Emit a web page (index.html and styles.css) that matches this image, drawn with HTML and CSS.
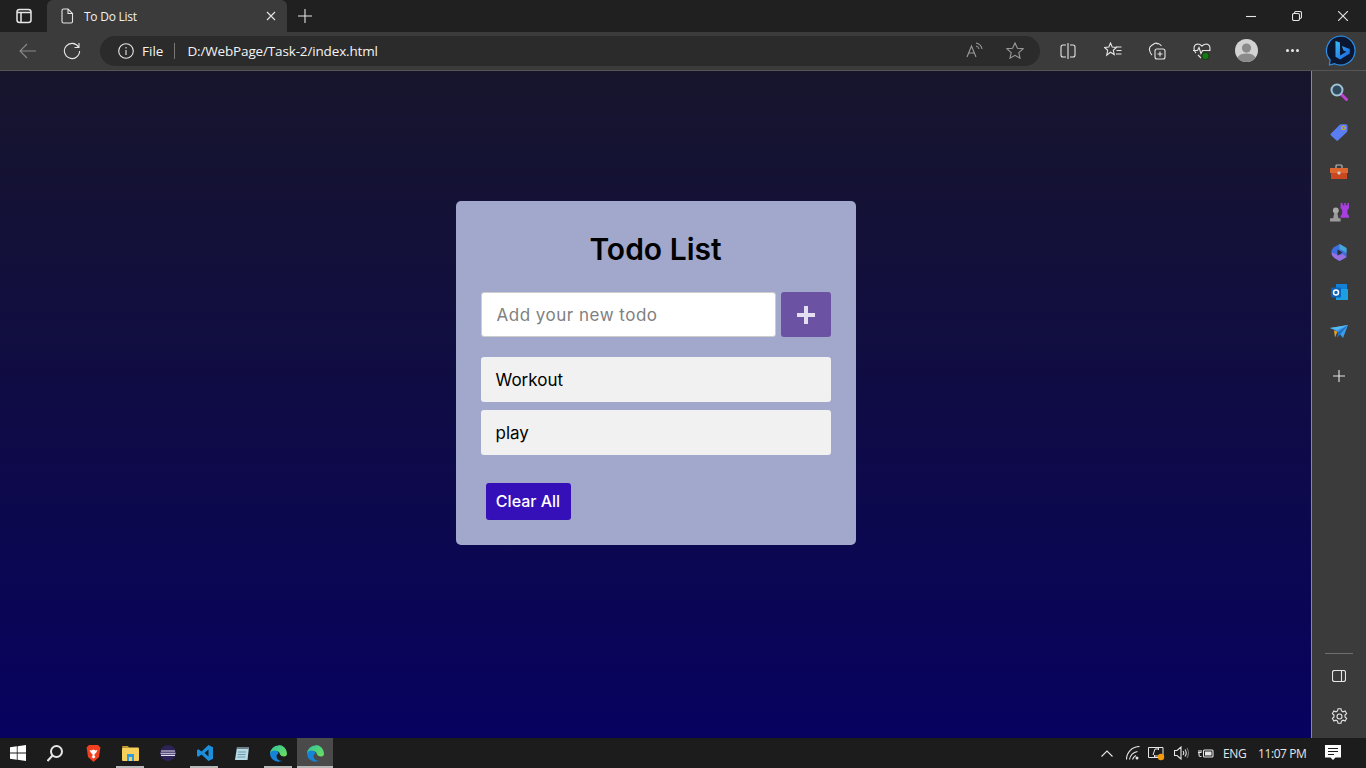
FILE: index.html
```html
<!DOCTYPE html>
<html lang="en">
<head>
    <meta charset="UTF-8">
    <meta name="viewport" content="width=device-width, initial-scale=1.0">
    <title>To Do List</title>
    <link rel="stylesheet" href="styles.css">
</head>
<body>
    <!-- browser title bar -->
    <div class="titlebar">
        <div class="tab-actions">
            <svg class="ico bold" width="16" height="16" viewBox="0 0 16 16"><rect x="1" y="1.500" width="14" height="13" rx="2.500"/><path d="M1 4.500h14M5 4.500v10"/></svg>
        </div>
        <div class="tab">
            <svg class="ico" width="14" height="16" viewBox="0 0 14 16"><path d="M2 2.500q0-1.500 1.500-1.500h4.500l4.500 4.500v8q0 1.500-1.500 1.500h-7.500q-1.500 0-1.500-1.500zM8 1v4.500h4.500"/></svg>
            <span class="tab-title">To Do List</span>
            <svg class="ico tab-close" width="10" height="10" viewBox="0 0 10 10"><path d="M1 1l8 8M9 1l-8 8"/></svg>
        </div>
        <div class="new-tab">
            <svg class="ico" width="14" height="14" viewBox="0 0 14 14"><path d="M7 0v14M0 7h14"/></svg>
        </div>
        <div class="window-btns">
            <div class="win-btn"><svg class="ico" width="10" height="10" viewBox="0 0 10 10"><path d="M0 5.500h10"/></svg></div>
            <div class="win-btn"><svg class="ico" width="10" height="10" viewBox="0 0 10 10"><rect x="0.500" y="2.500" width="7" height="7" rx="1.500"/><path d="M2.500 2.500v-.5q0-1.500 1.500-1.500h4q1.500 0 1.500 1.500v4q0 1.500-1.500 1.500h-.5"/></svg></div>
            <div class="win-btn"><svg class="ico" width="10" height="10" viewBox="0 0 10 10"><path d="M0 0l10 10M10 0l-10 10"/></svg></div>
        </div>
    </div>

    <!-- address bar and toolbar -->
    <div class="toolbar">
        <div class="tool-btn dim"><svg class="ico" width="18" height="16" viewBox="0 0 18 16"><path d="M17 8h-16M8 1l-7 7 7 7"/></svg></div>
        <div class="tool-btn"><svg class="ico" width="18" height="18" viewBox="0 0 18 18"><path d="M15.500 5a7.600 7.600 0 1 0 1.100 4M16 1v4.500h-4.500"/></svg></div>
        <div class="address">
            <svg class="ico" width="16" height="16" viewBox="0 0 16 16"><circle cx="8" cy="8" r="7.300"/><path d="M8 7v5M8 4v1.500"/></svg>
            <span class="scheme">File</span>
            <span class="addr-sep"></span>
            <span class="url">D:/WebPage/Task-2/index.html</span>
            <div class="addr-icons">
                <svg class="ico" width="18" height="16" viewBox="0 0 18 16"><path d="M1 15l4.500-11 4.500 11M2.800 11h5.400M10 1q5 1 6 6M10 4q2.500.5 3 3"/></svg>
                <svg class="ico" width="18" height="17" viewBox="0 0 18 17"><path d="M9 1l2.400 5.200 5.600.6-4.200 3.800 1.200 5.600-5-2.900-5 2.900 1.200-5.600-4.200-3.800 5.600-.6z"/></svg>
            </div>
        </div>
        <div class="tool-icons">
            <div class="tool-slot"><svg class="ico" width="16" height="16" viewBox="0 0 16 16"><path d="M8 0v16M6 2h-3q-2 0-2 2v8q0 2 2 2h3M10 2h3q2 0 2 2v8q0 2-2 2h-3"/></svg></div>
            <div class="tool-slot"><svg class="ico" width="18" height="17" viewBox="0 0 18 17"><path d="M6.500 1l1.700 4 4.300.4-3.200 2.900 1 4.200-3.800-2.300-3.800 3 1-4.900-3.200-2.900 4.300-.4zM12 5h5.500M12.500 8.500h5M12 12h5.500"/></svg></div>
            <div class="tool-slot"><svg class="ico" width="18" height="18" viewBox="0 0 18 18"><path d="M4 13q-2-2-2.500-5-.5-3 2-4.500l3-2q2-1 3.500.5M10 1.500q2 .5 3.500 2.500"/><rect x="7" y="7" width="10" height="10" rx="2"/><path d="M12 9.500v5M9.500 12h5"/></svg></div>
            <div class="tool-slot"><svg class="ico" width="18" height="18" viewBox="0 0 18 18"><path d="M3 11q-2-2-2-4.500 0-4 3.500-4.500 2.500 0 4.500 2 2-2 4.500-2 3.500.5 3.500 4.500 0 1-.5 2M0 8.500h4.500l1.500-3 2 6 1.500-3h8M5 13l3 3"/><circle class="health-dot" cx="12.500" cy="14" r="3.500"/></svg></div>
            <div class="tool-slot"><svg width="23" height="23" viewBox="0 0 24 24"><circle cx="12" cy="12" r="12" fill="#d2d2d2"/><circle cx="12" cy="9.500" r="4.800" fill="#8a8a8a"/><path d="M2.500 19.500q2-4.500 9.500-4.500t9.500 4.500q-3.500 4.500-9.500 4.500t-9.500-4.500z" fill="#8a8a8a"/></svg></div>
            <div class="tool-slot dots"><i></i><i></i><i></i></div>
            <div class="tool-slot bing">
                <svg width="31" height="31" viewBox="0 0 31 31">
                    <defs>
                        <linearGradient id="bing-b" x1="0" y1="0" x2="1" y2="1"><stop offset="0" stop-color="#37bdf5"/><stop offset="1" stop-color="#1a5fe0"/></linearGradient>
                    </defs>
                    <path d="M15.500 1a14.500 14.500 0 1 1-6 27.700l-5 1.300.6-5a14.500 14.500 0 0 1 10.400-24z" fill="#0b1730" stroke="#2b8fe8" stroke-width="1.200"/>
                    <path d="M10.500 6l4.500 1.600v13l6.500-3.800-3-1.400-1.700-4.300 8 2.800v4.500l-9.700 6-4.600-2.600z" fill="url(#bing-b)"/>
                </svg>
            </div>
        </div>
    </div>

    <div class="middle">
        <!-- the page itself -->
        <main class="page">
            <div class="todo-card">
                <h1 class="todo-title">Todo List</h1>
                <div class="todo-input-row">
                    <input class="todo-input" type="text" placeholder="Add your new todo">
                    <button class="todo-add">
                        <svg width="20" height="20" viewBox="0 0 20 20"><path d="M10 1v18M1 10h18"/></svg>
                    </button>
                </div>
                <ul class="todo-list">
                    <li class="todo-item">Workout</li>
                    <li class="todo-item">play</li>
                </ul>
                <div class="todo-footer">
                    <button class="clear-btn">Clear All</button>
                </div>
            </div>
        </main>

        <!-- edge sidebar -->
        <aside class="sidebar">
            <div class="side-slot"><svg width="18" height="18" viewBox="0 0 18 18"><path d="M11 11l5.500 5.500" stroke="#c23fd8" stroke-width="3" stroke-linecap="round"/><circle cx="7" cy="7" r="5.500" fill="#2f4a5c" stroke="#9fc4d8" stroke-width="2"/></svg></div>
            <div class="side-slot"><svg width="18" height="18" viewBox="0 0 18 18"><path d="M1 10.500l8.500-8.500q.8-.8 2-.8l4.500 0q1.500 0 1.500 1.500v4.500q0 1.200-.8 2l-8.500 8q-1 1-2 0l-5.200-4.800q-1-1 0-1.900z" fill="#5b7df2"/><circle cx="13.500" cy="5" r="1.800" fill="#5b7df2" stroke="#e8b422"/></svg></div>
            <div class="side-slot"><svg width="18" height="16" viewBox="0 0 18 16"><path d="M6 4v-2q0-1 1-1h4q1 0 1 1v2" fill="none" stroke="#b9b9b9" stroke-width="1.200"/><rect y="4" width="18" height="5" fill="#e0662f"/><rect x="1" y="9" width="16" height="6" fill="#c9481f"/><rect x="7.500" y="7.500" width="3" height="3" rx="1" fill="#cfcfcf"/></svg></div>
            <div class="side-slot"><svg width="19" height="20" viewBox="0 0 18 19"><path d="M10 1h2v2h1.500v-2h1.500v2h1.500v-2h1.500v5l-1.500 1.500v4l1.500 1.500v2h-8v-2l1.500-1.500v-4l-1.500-1.500z" fill="#a83fe0"/><circle cx="5.500" cy="8" r="2.800" fill="#aaa"/><path d="M4 10.500h3l1 5h2v3h-10v-3h3z" fill="#9b9b9b"/></svg></div>
            <div class="side-slot"><svg width="17" height="17" viewBox="0 0 17 17"><path d="M8.500 0l7 4v9l-3 2-4 2-5-3q-3-2-3-5.500t2-5z" fill="#3f6fdc"/><path d="M8.500 0l7 4v5l-4-2.500-3-1.500z" fill="#45a6d8"/><path d="M.5 8.500q0 3.500 3 5.500l5 3 7-4-4-3-3 1.500z" fill="#9a6fe0"/><path d="M6.500 5.500l5 3-5 3z" fill="#2c2c3a"/></svg></div>
            <div class="side-slot"><svg width="17" height="16" viewBox="0 0 17 16"><rect x="5" y="0" width="11" height="5.500" fill="#1180d6"/><rect x="5" y="5" width="12" height="11" fill="#1c9fe0"/><rect x="0" y="3.500" width="10" height="10" rx="1" fill="#0a63b8"/><circle cx="5" cy="8.500" r="2.500" fill="none" stroke="#fff" stroke-width="1.500"/></svg></div>
            <div class="side-slot"><svg width="18" height="14" viewBox="0 0 18 14"><path d="M0 3l18-3-5 13-5-6z" fill="#3a9ce8"/><path d="M18 0l-10 7-1 6z" fill="#1f6fc4"/><path d="M0 3l18-3-11 5z" fill="#59b9f2"/><path d="M4 5.500l3.500 1-2.500 6z" fill="#e8a020"/></svg></div>
            <div class="side-slot plus"><svg class="ico" width="12" height="12" viewBox="0 0 12 12"><path d="M6 0v12M0 6h12"/></svg></div>
            <div class="side-bottom">
                <span class="side-rule"></span>
                <div class="side-slot"><svg class="ico" width="14" height="12" viewBox="0 0 14 12"><rect x="0.500" y="0.500" width="13" height="11" rx="2"/><path d="M9.500 .5v11"/></svg></div>
                <div class="side-slot"><svg class="ico" width="17" height="17" viewBox="0 0 17 17"><path d="M7 .8h3l.5 2.200 1.500.8 2.100-.8 1.500 2.600-1.600 1.500v1.800l1.600 1.500-1.500 2.600-2.100-.8-1.500.8-.5 2.200h-3l-.5-2.200-1.500-.8-2.100.8-1.500-2.600 1.600-1.500v-1.800l-1.600-1.500 1.500-2.600 2.100.8 1.500-.8z"/><circle cx="8.500" cy="8.500" r="2.500"/></svg></div>
            </div>
        </aside>
    </div>

    <!-- windows taskbar -->
    <footer class="taskbar">
        <div class="task-slot start"><svg width="16" height="16" viewBox="0 0 16 16"><path d="M0 2.300l6.800-1v6.300h-6.800zM7.600 1.200l8.400-1.200v7.600h-8.400zM0 8.400h6.800v6.300l-6.800-1zM7.600 8.400h8.400v7.600l-8.400-1.200z" fill="#fff"/></svg></div>
        <div class="task-slot"><svg class="ico thick" width="16" height="17" viewBox="0 0 16 17"><circle cx="9.500" cy="6.500" r="5.500"/><path d="M5.500 10.500l-5 5.500"/></svg></div>
        <div class="task-slot"><svg width="15" height="17" viewBox="0 0 15 17"><path d="M3 0h9l2.500 2.500-.5 2.500-1 7-5.500 5-5.500-5-1-7-.5-2.500z" fill="#f0401f"/><path d="M3.500 5l2 .5 2-1 2 1 2-.5-1.500 3-1.500 1v2l1 1-2 1.500-2-1.500 1-1v-2l-1.500-1z" fill="#fff"/></svg></div>
        <div class="task-slot running"><svg width="17" height="15" viewBox="0 0 17 15"><path d="M0 1q0-1 1-1h5l1 1.500h-7z" fill="#c99a2a"/><rect y="1.500" width="17" height="13.500" rx="1" fill="#f7cf5a"/><rect x="5" y="8" width="7" height="7" fill="#2e9be0"/><rect x="7" y="11" width="3" height="4" fill="#f7cf5a"/></svg></div>
        <div class="task-slot"><svg width="16" height="16" viewBox="0 0 16 16"><circle cx="8" cy="8" r="8" fill="#2c2255"/><path d="M1 6h14M.5 8.200h15M1 10.400h14" stroke="#e4e0f2" stroke-width="1.100"/></svg></div>
        <div class="task-slot running"><svg width="16" height="16" viewBox="0 0 16 16"><path d="M11.500 0l4.500 2.200v11.600l-4.500 2.200-7-6.500-3 2.300-1.500-.8v-6l1.500-.8 3 2.300zM11.500 4.500l-4 3.500 4 3.500z" fill="#1c8fdc"/></svg></div>
        <div class="task-slot"><svg width="16" height="17" viewBox="0 0 16 17"><path d="M3 2h12l-1.500 13h-12.500z" fill="#b8dbe6"/><path d="M3 2h12l-.3 2h-12z" fill="#6c7f88"/><path d="M4 7h8M3.600 9.500h8M3.300 12h8" stroke="#6e97a8"/></svg></div>
        <div class="task-slot running"><svg class="edge" width="17" height="17" viewBox="0 0 17 17"><use href="#edge-logo"/></svg></div>
        <div class="task-slot active"><svg class="edge" width="17" height="17" viewBox="0 0 17 17"><use href="#edge-logo"/></svg></div>

        <div class="tray">
            <svg class="ico chevron" width="12" height="7" viewBox="0 0 12 7"><path d="M.5 6.500l5.500-5.500 5.500 5.500"/></svg>
            <svg class="ico" width="14" height="14" viewBox="0 0 14 14"><path d="M.5 13.500a13 13 0 0 1 13-13M3.500 13.500a10 10 0 0 1 8-8M6.500 13.500a7 7 0 0 1 3.500-4"/><circle class="tray-fill" cx="11" cy="12" r="1.500"/></svg>
            <svg class="tray-display" width="17" height="16" viewBox="0 0 17 16"><path class="tray-line" d="M.5 2.500h14.500v10h-14.500zM5 10l2-6h3M10 3l1 1-1 1M10 11h-3M7 10l-1 1 1 1"/><circle cx="13" cy="12" r="3.200" fill="#f59a0c"/></svg>
            <svg class="ico" width="16" height="14" viewBox="0 0 16 14"><path d="M.5 4.500h2.500l4-3.500v12l-4-3.500h-2.500zM9 5q1.500 2 0 4M11 3.500q2.500 3.500 0 7"/><path class="faint" d="M13 2q3 5 0 10"/></svg>
            <svg class="ico" width="16" height="12" viewBox="0 0 16 12"><rect x="5.500" y="3" width="9.500" height="7" rx="1"/><rect class="tray-fill" x="7" y="4.500" width="6.500" height="4"/><path d="M0 5.500h2.500M1 3v5q0 1.500 1.500 1.500h1M3 3v3"/></svg>
            <span class="tray-text lang">ENG</span>
            <span class="tray-text clock">11:07 PM</span>
            <svg class="notify" width="16" height="16" viewBox="0 0 16 16"><path d="M0 0h16v12.500h-5.500l-2.500 2.500-2.500-2.500h-5.500z" fill="#fff"/><path d="M3 3.500h10M3 6.500h10M3 9.500h6" stroke="#1c1c1c"/></svg>
        </div>
    </footer>

    <svg class="defs" width="0" height="0">
        <defs>
            <linearGradient id="edge-green" x1="0" y1="0" x2="1" y2="1"><stop offset="0" stop-color="#2fc4a0"/><stop offset="1" stop-color="#6fe05a"/></linearGradient>
            <symbol id="edge-logo" viewBox="0 0 17 17">
                <path d="M8.500 0a8.500 8.500 0 0 1 8.500 8.500q0 3-3 3t-4-2q0-2-2-3t-4.500 0-3.500 2.500a8.500 8.500 0 0 1 8.500-8.500z" fill="url(#edge-green)"/>
                <path d="M0 8.500q1-3 4.500-3t4 3q-2 .5-2 3t3 4q2.500.7 4-.5a8.500 8.500 0 0 1-13.500-6.500z" fill="#1583d8"/>
            </symbol>
        </defs>
    </svg>
</body>
</html>
```
FILE: styles.css
```css
* {
    box-sizing: border-box;
}

html, body {
    height: 100%;
}

body {
    margin: 0;
    display: flex;
    flex-direction: column;
    height: 768px;
    overflow: hidden;
    font-family: 'Open Sans', 'Noto Sans', sans-serif;
    background: #202020;
}

/* shared line icon look */
.ico {
    fill: none;
    stroke: #e6e6e6;
    stroke-width: 1.1;
    flex: none;
    display: block;
}

.ico.bold {
    stroke-width: 1.5;
}

.ico.thick {
    stroke-width: 2;
}

.ico .tray-fill {
    fill: #e6e6e6;
    stroke: none;
}

.ico .health-dot {
    fill: #107c10;
    stroke: #1f3a1f;
}

.ico .faint {
    stroke: #777;
}

.defs {
    position: absolute;
}

/* title bar */
.titlebar {
    height: 32px;
    flex: none;
    display: flex;
    align-items: flex-end;
    background: #202020;
}

.tab-actions {
    width: 47px;
    height: 32px;
    display: flex;
    align-items: center;
    padding-left: 16px;
}

.tab {
    width: 240px;
    height: 32px;
    background: #3b3b3b;
    border-radius: 6px 6px 0 0;
    display: flex;
    align-items: center;
    padding: 0 11px 0 13px;
    color: #f0f0f0;
    font-size: 12px;
}

.tab-title {
    margin-left: 10px;
    flex: 1;
    letter-spacing: -0.25px;
}

.new-tab {
    width: 36px;
    height: 32px;
    display: flex;
    align-items: center;
    justify-content: center;
}

.window-btns {
    margin-left: auto;
    height: 32px;
    display: flex;
}

.win-btn {
    width: 46px;
    height: 32px;
    display: flex;
    align-items: center;
    justify-content: center;
}

/* toolbar */
.toolbar {
    height: 39px;
    flex: none;
    display: flex;
    align-items: center;
    background: #3b3b3b;
    border-bottom: 1px solid #555;
    padding-left: 6px;
    padding-bottom: 1px;
}

.tool-btn {
    width: 44px;
    display: flex;
    justify-content: center;
}

.tool-btn.dim .ico {
    stroke: #8a8a8a;
}

.address {
    width: 940px;
    height: 30px;
    margin-left: 6px;
    border-radius: 15px;
    background: #2b2b2b;
    display: flex;
    align-items: center;
    padding-left: 18px;
    color: #f4f4f4;
    font-size: 13.500px;
}

.scheme {
    margin-left: 8px;
}

.addr-sep {
    width: 1px;
    height: 16px;
    background: #777;
    margin: 0 12px 0 11px;
}

.url {
    letter-spacing: -0.15px;
}

.addr-icons {
    margin-left: auto;
    display: flex;
    gap: 22px;
    padding-right: 16px;
}

.addr-icons .ico {
    stroke: #9a9a9a;
}

.tool-icons {
    display: flex;
    margin-left: 6px;
}

.tool-slot {
    width: 44.500px;
    height: 32px;
    display: flex;
    align-items: center;
    justify-content: center;
}

.tool-slot.dots {
    gap: 2px;
    width: 48px;
}

.tool-slot.bing {
    width: 47px;
}

.dots i {
    width: 3px;
    height: 3px;
    border-radius: 50%;
    background: #e6e6e6;
}

/* middle part */
.middle {
    flex: 1;
    display: flex;
    min-height: 0;
}

.page {
    flex: 1;
    padding-top: 130px;
    display: flex;
    justify-content: center;
    align-items: flex-start;
    background: linear-gradient(to bottom, #17152c, #07025f);
}

.todo-card {
    width: 400px;
    padding: 25px;
    border-radius: 5px;
    background: #a1a8cc;
    font-family: 'Inter', sans-serif;
}

.todo-title {
    margin: 0 0 20px;
    font-size: 30px;
    line-height: 46px;
    font-weight: 600;
    text-align: center;
    color: #000;
}

.todo-input-row {
    display: flex;
    gap: 5px;
}

.todo-input {
    flex: 1;
    min-width: 0;
    height: 45px;
    padding: 0 15px;
    border: 1px solid #ccc;
    border-radius: 3px;
    outline: none;
    background: #fff;
    font-family: 'Inter', sans-serif;
    font-size: 17px;
    letter-spacing: 0.5px;
}

.todo-input::placeholder {
    color: #808080;
}

.todo-add {
    width: 50px;
    height: 45px;
    border: none;
    border-radius: 3px;
    padding: 0;
    background: #6c52a3;
    display: flex;
    align-items: center;
    justify-content: center;
}

.todo-add path {
    fill: none;
    stroke: #e4dff0;
    stroke-width: 4;
}

.todo-list {
    list-style: none;
    margin: 20px 0 0;
    padding: 0;
    display: flex;
    flex-direction: column;
    gap: 8px;
}

.todo-item {
    height: 45px;
    padding: 0 15px;
    border-radius: 3px;
    background: #f1f1f1;
    color: #000;
    font-size: 17px;
    display: flex;
    align-items: center;
}

.todo-footer {
    margin: 28px 0 0 5px;
}

.clear-btn {
    display: block;
    width: 85px;
    height: 37px;
    padding: 0 0 2px;
    border: none;
    border-radius: 3px;
    background: #3510b8;
    color: #fff;
    font-family: 'Inter', sans-serif;
    font-size: 16px;
    font-weight: 500;
}

/* sidebar */
.sidebar {
    width: 55px;
    flex: none;
    display: flex;
    flex-direction: column;
    align-items: center;
    background: #3b3b3b;
    border-left: 1px solid #8a8a8a;
}

.side-slot {
    width: 100%;
    height: 40px;
    flex: none;
    display: flex;
    align-items: center;
    justify-content: center;
}

.side-slot:first-child {
    margin-top: 1px;
}

.side-slot.plus {
    margin-top: 4px;
}

.side-bottom {
    margin-top: auto;
    width: 100%;
    display: flex;
    flex-direction: column;
    align-items: center;
    padding-bottom: 2px;
}

.side-rule {
    width: 28px;
    height: 1px;
    background: #6e6e6e;
    margin-bottom: 2px;
}

/* taskbar */
.taskbar {
    height: 30px;
    flex: none;
    display: flex;
    background: #1c1c1c;
}

.task-slot {
    width: 37px;
    height: 30px;
    display: flex;
    align-items: center;
    justify-content: center;
    position: relative;
}

.task-slot.start {
    width: 36px;
}

.task-slot:nth-child(2),
.task-slot:nth-child(3) {
    width: 38px;
}

.task-slot.running::after,
.task-slot.active::after {
    content: "";
    position: absolute;
    left: 4px;
    right: 5px;
    bottom: 0;
    height: 2px;
    background: #b8b8b8;
}

.task-slot.active {
    width: 36px;
    background: #4a4a4a;
}

.task-slot.active::after {
    left: 0;
    right: 0;
}

.tray {
    margin-left: auto;
    display: flex;
    align-items: center;
    height: 30px;
    padding-right: 25px;
    gap: 8.500px;
    color: #e6e6e6;
    font-size: 12px;
}

.tray-line {
    fill: none;
    stroke: #e6e6e6;
}

.chevron {
    margin-right: 4px;
}

.tray-text.lang {
    letter-spacing: -0.3px;
}

.tray-text.clock {
    margin-left: 3px;
    letter-spacing: -0.4px;
}

.notify {
    margin-left: 10px;
}
```
